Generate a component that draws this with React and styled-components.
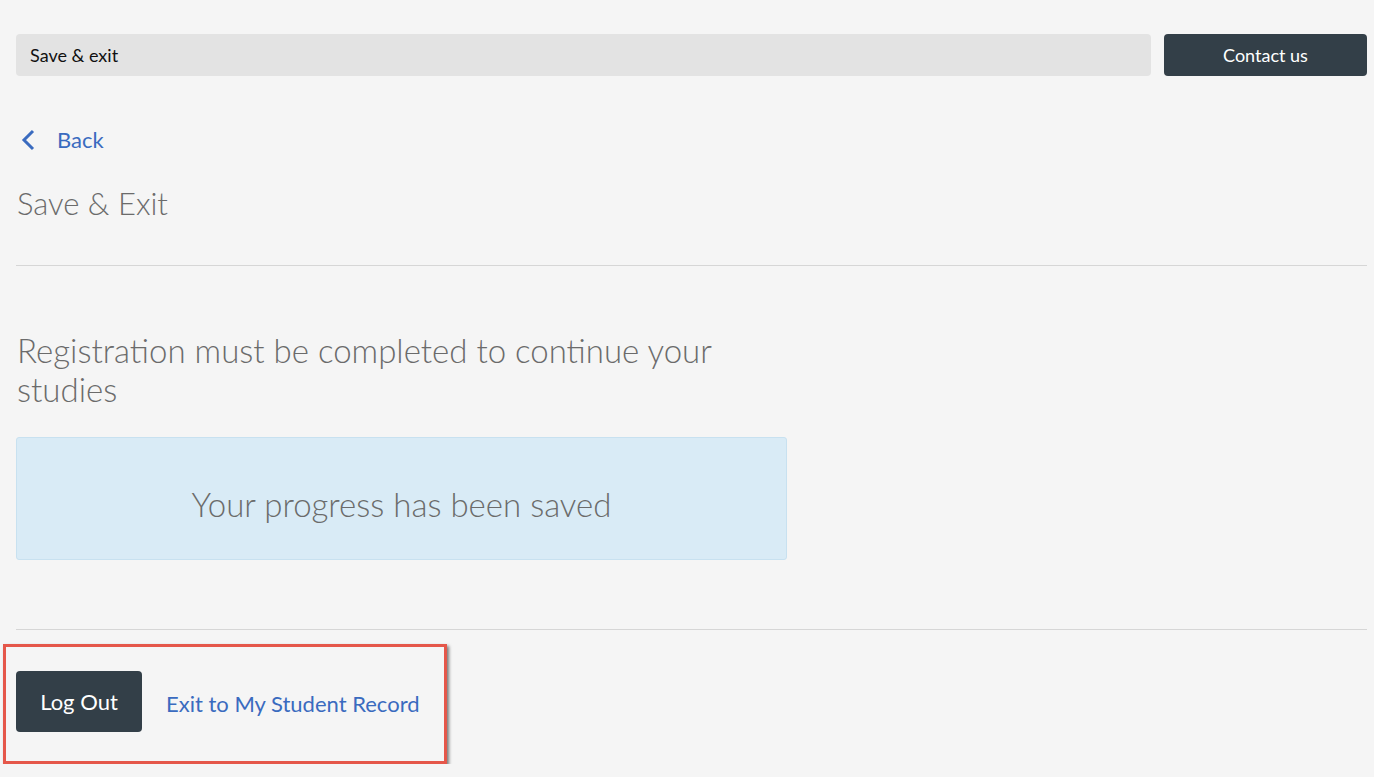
import styled, { createGlobalStyle } from "styled-components"

const Global = createGlobalStyle`
  html, body {
    margin: 0;
    background: #f5f5f5;
    font-family: Lato, "Open Sans", "Liberation Sans", sans-serif;
  }
`

const Page = styled.div`
  padding: 34px 7px 0 16px;
`

const TopBar = styled.div`
  display: flex;
  gap: 13px;
  height: 42px;
`

const SaveBar = styled.div`
  flex: 1;
  display: flex;
  align-items: center;
  padding-left: 14px;
  background: #e3e3e3;
  border-radius: 4px;
  font-size: 18px;
  color: #111;
`

const DarkButton = styled.button`
  background: #333f48;
  color: #fff;
  border: 0;
  border-radius: 4px;
  font-family: inherit;
  font-size: ${p => p.big ? "22px" : "18px"};
  width: ${p => p.big ? "126px" : "203px"};
  height: ${p => p.big ? "61px" : "42px"};
  cursor: pointer;
`

const BackLink = styled.a`
  display: flex;
  align-items: center;
  gap: 20px;
  margin-top: 50px;
  padding-left: 5px;
  font-size: 22px;
  color: #3a6bbf;
  text-decoration: none;
`

const Title = styled.h1`
  margin: 30px 0 0 1px;
  font-size: 31px;
  font-weight: 300;
  color: #6b6b6b;
  line-height: 40px;
`

const Rule = styled.hr`
  border: 0;
  border-top: 1px solid #d6d6d6;
  margin: ${p => p.m};
`

const Lead = styled.h2`
  margin: 0 0 0 1px;
  max-width: 760px;
  font-size: 33px;
  font-weight: 300;
  line-height: 39px;
  color: #6b6b6b;
`

const Notice = styled.div`
  width: 771px;
  height: 123px;
  box-sizing: border-box;
  margin-top: 28px;
  padding-top: 10px;
  display: flex;
  align-items: center;
  justify-content: center;
  background: #d9ebf6;
  border: 1px solid #c8e1f0;
  border-radius: 3px;
  font-size: 33px;
  font-weight: 300;
  color: #6b6b6b;
`

const Highlight = styled.div`
  display: inline-flex;
  align-items: center;
  gap: 24px;
  margin: 14px 0 0 -13px;
  padding: 24px 24px 29px 10px;
  border: 3px solid #e5574a;
  box-shadow: 2px 2px 3px rgba(0, 0, 0, 0.5);
`

const TextLink = styled.a`
  font-size: 22px;
  color: #3a6bbf;
  text-decoration: none;
  padding-top: 4px;
`

function App() {
  return <>
    <Global />
    <Page>
      <TopBar>
        <SaveBar>Save &amp; exit</SaveBar>
        <DarkButton>Contact us</DarkButton>
      </TopBar>

      <BackLink href="#">
        <svg width="16" height="22" viewBox="0 0 16 22">
          <path d="M12 2 L3 11 L12 20" fill="none" stroke="#3a6bbf" strokeWidth="3" />
        </svg>
        Back
      </BackLink>

      <Title>Save &amp; Exit</Title>
      <Rule m="42px 0 65px" />

      <Lead>Registration must be completed to continue your studies</Lead>
      <Notice>Your progress has been saved</Notice>

      <Rule m="69px 0 0" />

      <Highlight>
        <DarkButton big>Log Out</DarkButton>
        <TextLink href="#">Exit to My Student Record</TextLink>
      </Highlight>
    </Page>
  </>
}

export default App;
